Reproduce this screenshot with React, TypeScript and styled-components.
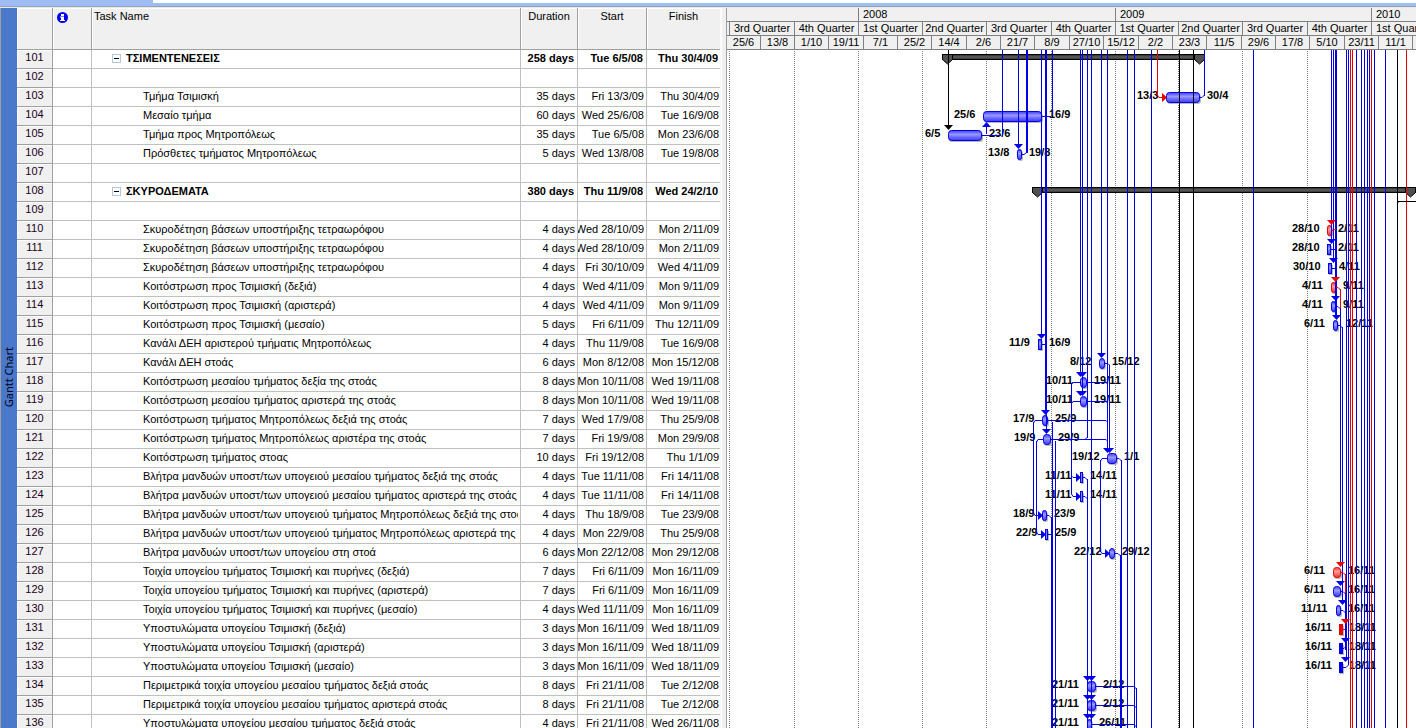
import React from "react";
import styled, { createGlobalStyle } from "styled-components";

const GlobalStyle = createGlobalStyle`
  html, body, #root { height: 100%; }
  body {
    margin: 0;
    overflow: hidden;
    background: #fff;
    color: #000;
    font-family: "Liberation Sans", Arial, sans-serif;
    font-size: 11px;
  }
`;

const ROW = 19;
const FIRST_ROW = 101;

/* ---------- data ---------- */

type Task = {
  id: number;
  name?: string;
  duration?: string;
  start?: string;
  finish?: string;
  summary?: boolean;
};

const t = (id: number, name: string, duration: string, start: string, finish: string, summary = false): Task => ({
  id,
  name,
  duration,
  start,
  finish,
  summary,
});

const tasks: Task[] = [
  t(101, "ΤΣΙΜΕΝΤΕΝΕΣΕΙΣ", "258 days", "Tue 6/5/08", "Thu 30/4/09", true),
  { id: 102 },
  t(103, "Τμήμα Τσιμισκή", "35 days", "Fri 13/3/09", "Thu 30/4/09"),
  t(104, "Μεσαίο τμήμα", "60 days", "Wed 25/6/08", "Tue 16/9/08"),
  t(105, "Τμήμα προς Μητροπόλεως", "35 days", "Tue 6/5/08", "Mon 23/6/08"),
  t(106, "Πρόσθετες τμήματος Μητροπόλεως", "5 days", "Wed 13/8/08", "Tue 19/8/08"),
  { id: 107 },
  t(108, "ΣΚΥΡΟΔΕΜΑΤΑ", "380 days", "Thu 11/9/08", "Wed 24/2/10", true),
  { id: 109 },
  t(110, "Σκυροδέτηση βάσεων υποστήριξης τετραωρόφου", "4 days", "Wed 28/10/09", "Mon 2/11/09"),
  t(111, "Σκυροδέτηση βάσεων υποστήριξης τετραωρόφου", "4 days", "Wed 28/10/09", "Mon 2/11/09"),
  t(112, "Σκυροδέτηση βάσεων υποστήριξης τετραωρόφου", "4 days", "Fri 30/10/09", "Wed 4/11/09"),
  t(113, "Κοιτόστρωση προς Τσιμισκή (δεξιά)", "4 days", "Wed 4/11/09", "Mon 9/11/09"),
  t(114, "Κοιτόστρωση προς Τσιμισκή (αριστερά)", "4 days", "Wed 4/11/09", "Mon 9/11/09"),
  t(115, "Κοιτόστρωση προς Τσιμισκή (μεσαίο)", "5 days", "Fri 6/11/09", "Thu 12/11/09"),
  t(116, "Κανάλι ΔΕΗ αριστερού τμήματις Μητροπόλεως", "4 days", "Thu 11/9/08", "Tue 16/9/08"),
  t(117, "Κανάλι ΔΕΗ στοάς", "6 days", "Mon 8/12/08", "Mon 15/12/08"),
  t(118, "Κοιτόστρωση μεσαίου τμήματος δεξία της στοάς", "8 days", "Mon 10/11/08", "Wed 19/11/08"),
  t(119, "Κοιτόστρωση μεσαίου τμήματος αριστερά της στοάς", "8 days", "Mon 10/11/08", "Wed 19/11/08"),
  t(120, "Κοιτόστρωση τμήματος Μητροπόλεως δεξιά της στοάς", "7 days", "Wed 17/9/08", "Thu 25/9/08"),
  t(121, "Κοιτόστρωση τμήματος Μητροπόλεως αριστέρα της στοάς", "7 days", "Fri 19/9/08", "Mon 29/9/08"),
  t(122, "Κοιτόστρωση τμήματος στοας", "10 days", "Fri 19/12/08", "Thu 1/1/09"),
  t(123, "Βλήτρα μανδυών υποστ/των υπογειού μεσαίου τμήματος δεξιά της στοάς", "4 days", "Tue 11/11/08", "Fri 14/11/08"),
  t(124, "Βλήτρα μανδυών υποστ/των υπογειού μεσαίου τμήματος αριστερά της στοάς", "4 days", "Tue 11/11/08", "Fri 14/11/08"),
  t(125, "Βλήτρα μανδυών υποστ/των υπογειού τμήματος Μητροπόλεως δεξιά της στοάς", "4 days", "Thu 18/9/08", "Tue 23/9/08"),
  t(126, "Βλήτρα μανδυών υποστ/των υπογειού τμήματος Μητροπόλεως αριστερά της στοάς", "4 days", "Mon 22/9/08", "Thu 25/9/08"),
  t(127, "Βλήτρα μανδυών υποστ/των υπογείου στη στοά", "6 days", "Mon 22/12/08", "Mon 29/12/08"),
  t(128, "Τοιχία υπογείου τμήματος Τσιμισκή και πυρήνες (δεξιά)", "7 days", "Fri 6/11/09", "Mon 16/11/09"),
  t(129, "Τοιχία υπογείου τμήματος Τσιμισκή και πυρήνες (αριστερά)", "7 days", "Fri 6/11/09", "Mon 16/11/09"),
  t(130, "Τοιχία υπογείου τμήματος Τσιμισκή και πυρήνες (μεσαίο)", "4 days", "Wed 11/11/09", "Mon 16/11/09"),
  t(131, "Υποστυλώματα υπογείου Τσιμισκή (δεξιά)", "3 days", "Mon 16/11/09", "Wed 18/11/09"),
  t(132, "Υποστυλώματα υπογείου Τσιμισκή (αριστερά)", "3 days", "Mon 16/11/09", "Wed 18/11/09"),
  t(133, "Υποστυλώματα υπογείου Τσιμισκή (μεσαίο)", "3 days", "Mon 16/11/09", "Wed 18/11/09"),
  t(134, "Περιμετρικά τοιχία υπογείου μεσαίου τμήματος δεξιά στοάς", "8 days", "Fri 21/11/08", "Tue 2/12/08"),
  t(135, "Περιμετρικά τοιχία υπογείου μεσαίου τμήματος αριστερά στοάς", "8 days", "Fri 21/11/08", "Tue 2/12/08"),
  t(136, "Υποστυλώματα υπογείου μεσαίου τμήματος δεξιά στοάς", "4 days", "Fri 21/11/08", "Wed 26/11/08"),
];

type Scale = { label: string; width: number };

const years: Scale[] = [
  { label: "", width: 132 },
  { label: "2008", width: 257 },
  { label: "2009", width: 256 },
  { label: "2010", width: 257 },
];

const quarterNames = ["1st Quarter", "2nd Quarter", "3rd Quarter", "4th Quarter"];
const quarters: Scale[] = [
  { label: "", width: 3 },
  ...[65, 64, 64, 64, 65, 64, 63, 64, 65, 64, 64].map((width, i) => ({
    label: quarterNames[(i + 2) % 4],
    width,
  })),
];

const weekLabels =
  "25/6 13/8 1/10 19/11 7/1 25/2 14/4 2/6 21/7 8/9 27/10 15/12 2/2 23/3 11/5 29/6 17/8 5/10 23/11 11/1".split(" ");
const weekWidths = [34, 34, 34, 35, 34, 34, 35, 34, 34, 35, 34, 35, 34, 34, 35, 34, 34, 35, 34, 34];
const weeks: Scale[] = [...weekLabels.map((label, i) => ({ label, width: weekWidths[i] })), { label: "", width: 34 }];

/* Chart geometry: x on the timeline in pixels, y counted from the top of the window. */
const ORIGIN_X = 727;
const ORIGIN_Y = 50;

const BLUE = "#0000e8";
const RED = "#e80000";
const BLACK = "#000000";

type Bar = {
  id: number;
  from: number;
  to: number;
  left: [string, number];
  right: [string, number];
  critical?: boolean;
};

const b = (id: number, from: number, to: number, l: string, lx: number, r: string, rx: number, critical = false): Bar => ({
  id,
  from,
  to,
  left: [l, lx],
  right: [r, rx],
  critical,
});

const bars: Bar[] = [
  b(103, 1166, 1200, "13/3", 1137, "30/4", 1207),
  b(104, 983, 1042, "25/6", 954, "16/9", 1049),
  b(105, 948, 982, "6/5", 925, "23/6", 989),
  b(106, 1017, 1022, "13/8", 988, "19/8", 1029),
  b(110, 1327, 1332, "28/10", 1292, "2/11", 1338, true),
  b(111, 1327, 1331, "28/10", 1292, "2/11", 1338),
  b(112, 1328, 1332, "30/10", 1293, "4/11", 1339),
  b(113, 1331, 1336, "4/11", 1302, "9/11", 1343, true),
  b(114, 1331, 1336, "4/11", 1302, "9/11", 1343),
  b(115, 1333, 1338, "6/11", 1304, "12/11", 1346),
  b(116, 1038, 1042, "11/9", 1009, "16/9", 1049),
  b(117, 1099, 1105, "8/12", 1070, "15/12", 1112),
  b(118, 1080, 1087, "10/11", 1046, "19/11", 1094),
  b(119, 1080, 1087, "10/11", 1046, "19/11", 1094),
  b(120, 1042, 1048, "17/9", 1013, "25/9", 1055),
  b(121, 1043, 1051, "19/9", 1014, "29/9", 1058),
  b(122, 1107, 1117, "19/12", 1072, "1/1", 1124),
  b(123, 1080, 1083, "11/11", 1045, "14/11", 1090),
  b(124, 1080, 1083, "11/11", 1045, "14/11", 1090),
  b(125, 1042, 1047, "18/9", 1013, "23/9", 1054),
  b(126, 1045, 1048, "22/9", 1016, "25/9", 1055),
  b(127, 1109, 1115, "22/12", 1074, "29/12", 1122),
  b(128, 1333, 1341, "6/11", 1304, "16/11", 1348, true),
  b(129, 1333, 1341, "6/11", 1304, "16/11", 1348),
  b(130, 1336, 1341, "11/11", 1301, "16/11", 1348),
  b(131, 1339, 1343, "16/11", 1305, "18/11", 1349, true),
  b(132, 1339, 1343, "16/11", 1305, "18/11", 1349),
  b(133, 1339, 1343, "16/11", 1305, "18/11", 1349),
  b(134, 1087, 1096, "21/11", 1052, "2/12", 1103),
  b(135, 1087, 1096, "21/11", 1052, "2/12", 1103),
  b(136, 1087, 1092, "21/11", 1052, "26/11", 1099),
];

const BOTTOM = 740;

/* Vertical link segments: x, top, bottom, colour, thickness. */
const verticals: [number, number, number, string, number?][] = [
  [948, 50, 126, BLACK],
  [986, 126, 134, BLUE],
  [1002, 50, 135, BLUE],
  [1018, 50, 146, BLUE],
  [1026, 50, 153, BLUE, 2],
  [1041, 50, 336, BLUE],
  [1045, 50, 412, BLUE, 2],
  [1046, 412, 431, BLUE],
  [1052, 50, 115, BLUE],
  [1080, 50, 375, BLUE],
  [1082, 50, 394, BLUE],
  [1087, 50, 438, BLUE],
  [1087, 479, 728, BLUE],
  [1091, 50, 728, BLUE],
  [1101, 50, 355, BLUE],
  [1107, 50, 452, BLUE],
  [1109, 365, 452, BLUE],
  [1127, 50, BOTTOM, BLUE],
  [1134, 50, BOTTOM, BLUE],
  [1151, 50, BOTTOM, BLUE],
  [1157, 50, 96, RED],
  [1179, 50, BOTTOM, BLACK],
  [1193, 50, BOTTOM, BLACK],
  [1204, 50, 96, BLUE],
  [1253, 50, BOTTOM, BLUE],
  [1331, 50, 242, BLUE],
  [1333, 50, 261, BLUE],
  [1335, 50, 317, BLUE, 2],
  [1340, 289, 308, RED],
  [1340, 308, 564, BLUE],
  [1342, 327, 602, BLUE],
  [1346, 50, 659, BLUE],
  [1345, 574, 593, RED],
  [1345, 593, 650, BLUE],
  [1348, 50, 665, BLUE],
  [1350, 50, BOTTOM, RED],
  [1352, 50, BOTTOM, RED],
  [1356, 50, BOTTOM, BLUE],
  [1361, 50, BOTTOM, BLUE],
  [1364, 50, BOTTOM, BLUE],
  [1367, 50, BOTTOM, BLUE],
  [1369, 50, BOTTOM, BLUE],
  [1371, 50, BOTTOM, RED],
  [1374, 50, BOTTOM, BLUE],
  [1385, 50, BOTTOM, BLUE],
  [1397, 50, BOTTOM, BLACK],
  [1406, 50, BOTTOM, RED],
  [1033, 422, 513, BLUE],
  [1036, 441, 532, BLUE],
  [1052, 422, BOTTOM, BLUE],
  [1051, 517, BOTTOM, BLUE],
  [1055, 441, BOTTOM, BLUE],
  [1071, 384, 494, BLUE],
  [1100, 460, 552, BLUE],
  [1121, 460, BOTTOM, BLUE],
  [1120, 555, BOTTOM, BLUE],
  [1136, 688, BOTTOM, BLUE],
];

/* Connectors that leave or enter a bar; the corners are cut by one pixel. */
const connectors: [string, string][] = [
  ["M982 135.5H1001", BLUE],
  ["M1042 116.5H1051", BLUE],
  ["M1022 154.5H1024L1026 153", BLUE],
  ["M1157.5 95L1159 97.5H1164", RED],
  ["M1200 97.5H1202L1204.5 95", BLUE],
  ["M1042 344.5H1046", BLUE],
  ["M1105 363.5H1108L1109.5 365", BLUE],
  ["M1071.5 385V383.5L1073 382.5H1081M1088 382.5H1107", BLUE],
  ["M1073 401.5H1081M1071.5 403L1073 401.5M1088 401.5H1107", BLUE],
  ["M1033.5 423L1035 420.5H1042M1048 420.5H1106L1107.5 422", BLUE],
  ["M1036.5 442L1038 439.5H1043M1051 439.5H1106L1107.5 441M1085 439.5L1087.5 437", BLUE],
  ["M1100.5 461L1102 458.5H1107M1117 458.5H1119L1121.5 461", BLUE],
  ["M1071.5 476L1073 477.5H1077M1083 477.5H1085L1087.5 480", BLUE],
  ["M1071.5 494L1073 496.5H1077M1083 496.5H1085L1087.5 499", BLUE],
  ["M1033.5 513L1035 515.5H1039M1047 515.5H1049L1051.5 518", BLUE],
  ["M1036.5 532L1038 534.5H1042M1048 534.5H1051", BLUE],
  ["M1100.5 551L1102 553.5H1106M1115 553.5H1118L1120.5 556", BLUE],
  ["M1096 686.5H1134L1136.5 689", BLUE],
  ["M1096 705.5H1134L1136.5 708", BLUE],
  ["M1092 724.5H1134L1136.5 727", BLUE],
  ["M1332 230.5H1333L1336 229", RED],
  ["M1331 249.5H1335", BLUE],
  ["M1332 268.5H1335", BLUE],
  ["M1336 287.5H1338L1340.5 290", RED],
  ["M1336 306.5H1338L1340.5 309", BLUE],
  ["M1338 325.5H1340L1342.5 328", BLUE],
  ["M1341 572.5H1343L1345.5 575", RED],
  ["M1341 591.5H1343L1345.5 594", BLUE],
  ["M1341 610.5H1343L1345.5 613", BLUE],
  ["M1343 629.5H1345", RED],
  ["M1343 648.5H1344L1346.5 646", BLUE],
  ["M1343 667.5H1346L1348.5 665", BLUE],
  ["M1398 203V201.5H1420", BLACK],
];

type Direction = "down" | "up" | "right";
const arrows: [number, number, Direction, string][] = [
  [948, 125, "down", BLACK],
  [986, 122, "up", BLUE],
  [1018, 144, "down", BLUE],
  [1162, 97, "right", RED],
  [1041, 334, "down", BLUE],
  [1045, 410, "down", BLUE],
  [1046, 429, "down", BLUE],
  [1101, 353, "down", BLUE],
  [1080, 372, "down", BLUE],
  [1082, 372, "down", BLUE],
  [1080, 391, "down", BLUE],
  [1082, 391, "down", BLUE],
  [1107, 448, "down", BLUE],
  [1109, 448, "down", BLUE],
  [1076, 477, "right", BLUE],
  [1076, 496, "right", BLUE],
  [1038, 515, "right", BLUE],
  [1041, 534, "right", BLUE],
  [1105, 553, "right", BLUE],
  [1331, 220, "down", RED],
  [1331, 239, "down", BLUE],
  [1333, 258, "down", BLUE],
  [1335, 277, "down", RED],
  [1335, 296, "down", BLUE],
  [1336, 315, "down", BLUE],
  [1340, 562, "down", RED],
  [1340, 581, "down", BLUE],
  [1342, 600, "down", BLUE],
  [1345, 619, "down", RED],
  [1345, 638, "down", BLUE],
  [1345, 657, "down", BLUE],
  ...[676, 695, 714].flatMap((y): [number, number, Direction, string][] => [
    [1087, y, "down", BLUE],
    [1091, y, "down", BLUE],
  ]),
];

const quarterLines = [729, 794, 858, 922, 986, 1051, 1115, 1178, 1242, 1307];

/* ---------- page frame ---------- */

const Page = styled.main`
  height: 100vh;
  display: flex;
  flex-direction: column;
  overflow: hidden;
`;

const EntryStrip = styled.div`
  flex: none;
  display: flex;
  height: 6px;
  background: #9dbcf4;
  border-bottom: 1px solid #a0a0a0;
`;

const EntryField = styled.div`
  flex: 1;
  height: 3px;
  margin-left: 153px;
  background: #fff;
`;

const Workspace = styled.div`
  flex: 1;
  min-height: 0;
  display: flex;
  align-items: stretch;
  overflow: hidden;
  border-top: 1px solid #dcecf8;
`;

const ViewBar = styled.aside`
  flex: none;
  box-sizing: border-box;
  width: 17px;
  padding-top: 339px;
  background: #4a79cb;
  border-left: 1px solid #a0a0a0;
  color: #000014;
  font: 11px/16px "Noto Sans", "Open Sans", sans-serif;
`;

const ViewName = styled.span`
  display: block;
  writing-mode: vertical-rl;
  rotate: 180deg;
  white-space: nowrap;
`;

/* ---------- task table ---------- */

const TaskTable = styled.table`
  flex: none;
  align-self: flex-start;
  width: 703px;
  table-layout: fixed;
  border-collapse: separate;
  border-spacing: 0;
`;

const HeadCell = styled.th<{ $align?: "left" | "center" }>`
  box-sizing: border-box;
  height: 42px;
  padding: 0 2px;
  vertical-align: top;
  text-align: ${(p) => p.$align ?? "center"};
  font-weight: 400;
  line-height: 16px;
  background: #f0f0f0;
  border-right: 1px solid #a0a0a0;
  border-bottom: 1px solid #a0a0a0;
  box-shadow: inset 1px 1px #fff;
  &:last-child { border-right: 0; }
`;

const RowNumber = styled.th`
  box-sizing: border-box;
  height: ${ROW}px;
  padding: 0 0 4px;
  text-align: center;
  font-weight: 400;
  line-height: 14px;
  color: #200020;
  background: #f0f0f0;
  border-right: 1px solid #a0a0a0;
  border-bottom: 1px solid #a0a0a0;
  box-shadow: inset 1px 1px #fff;
`;

const Cell = styled.td<{ $bold?: boolean }>`
  box-sizing: border-box;
  height: ${ROW}px;
  padding: 0;
  border-right: 1px solid #c0c0c0;
  border-bottom: 1px solid #c0c0c0;
  font-weight: ${(p) => (p.$bold ? 700 : 400)};
  &:last-child { border-right: 0; }
`;

const NameText = styled.div<{ $summary?: boolean }>`
  display: flex;
  align-items: center;
  gap: 5px;
  height: 16px;
  margin: 0 2px 2px 0;
  padding-left: ${(p) => (p.$summary ? 20 : 51)}px;
  overflow: hidden;
  line-height: 16px;
  white-space: nowrap;
`;

const ValueText = styled.div<{ $inset: number }>`
  display: flex;
  justify-content: flex-end;
  height: 16px;
  margin: 0 ${(p) => p.$inset}px 2px 0;
  overflow: hidden;
  line-height: 16px;
  white-space: nowrap;
`;

const Toggle = styled.button`
  flex: none;
  display: flex;
  align-items: center;
  justify-content: center;
  box-sizing: border-box;
  width: 9px;
  height: 9px;
  padding: 0;
  border: 1px solid #b4c8dc;
  background: #fff;
  &::before {
    content: "";
    width: 5px;
    height: 1px;
    background: #000;
  }
`;

const InfoIcon = styled.svg`
  display: block;
  margin: 4px 0 0 2px;
`;

/* ---------- chart ---------- */

const Splitter = styled.div`
  flex: none;
  box-sizing: border-box;
  width: 7px;
  background: #f0f0f0;
  border-left: 1px solid #fafafa;
  border-right: 1px solid #a0a0a0;
  box-shadow: inset 1px 0 #fff;
`;

const ChartPane = styled.section`
  flex: 1;
  min-width: 0;
  overflow: hidden;
`;

const ScaleRow = styled.div`
  display: flex;
  box-sizing: border-box;
  height: 14px;
  overflow: hidden;
  background: #f0f0f0;
  border-bottom: 1px solid #808080;
`;

const ScaleCell = styled.div<{ $width: number; $left?: boolean }>`
  flex: none;
  box-sizing: border-box;
  width: ${(p) => p.$width}px;
  padding-left: ${(p) => (p.$left ? 4 : 0)}px;
  overflow: hidden;
  text-align: ${(p) => (p.$left ? "left" : "center")};
  line-height: 12px;
  white-space: nowrap;
  border-right: 1px solid #808080;
`;

const Chart = styled.svg`
  display: block;
  width: 100%;
  height: ${ROW * 36}px;
`;

const BarLabel = styled.text`
  font: 700 11px "Liberation Sans", Arial, sans-serif;
`;

const rowTop = (id: number) => ORIGIN_Y + (id - FIRST_ROW) * ROW;

function arrowPath(x: number, y: number, dir: Direction) {
  if (dir === "down") return `M${x - 4} ${y}h9l-4.5 5z`;
  if (dir === "up") return `M${x - 4} ${y + 5}h9l-4.5 -5z`;
  return `M${x} ${y - 4}v9l5 -4.5z`;
}

function TaskBar({ bar }: { bar: Bar }) {
  const y = rowTop(bar.id) + 4;
  const w = bar.to - bar.from;
  const solid = w === 4 && bar.id > 130;
  const stroke = bar.critical ? RED : BLUE;
  const fill = solid || w < 4 ? stroke : bar.critical ? "url(#critical)" : "url(#normal)";
  const radius = w > 5 ? 3 : w > 4 ? 2 : 0;
  return (
    <g>
      <rect x={bar.from + 1} y={y + 2} width={w} height={10} rx={radius} fill="#b8b8b8" />
      <rect x={bar.from + 0.5} y={y + 0.5} width={w - 1} height={10} rx={radius} fill={fill} stroke={stroke} />
      {w === 3 && <rect x={bar.from + 1} y={y + 1} width={1} height={9} fill="#8080ff" />}
    </g>
  );
}

function SummaryBar({ id, from, to }: { id: number; from: number; to: number }) {
  const y = rowTop(id) + 4;
  const cap = (x: number) => `M${x + 0.5} ${y + 0.5}h10v5l-5 4.5l-5 -4.5z`;
  return (
    <g>
      <rect x={from} y={y} width={to - from} height={6} fill="#000" />
      <rect x={from} y={y + 1} width={to - from} height={4} fill="url(#summary)" />
      <path d={cap(from)} fill="#505050" stroke="#000" />
      <path d={cap(to - 11)} fill="#505050" stroke="#000" />
    </g>
  );
}

function GanttChart() {
  return (
    <Chart role="img" aria-label="Gantt chart">
      <defs>
        <linearGradient id="normal" x1="0" y1="0" x2="0" y2="1">
          <stop offset="0" stopColor="#4040ff" />
          <stop offset="0.4" stopColor="#9898ff" />
          <stop offset="0.65" stopColor="#6c6cff" />
          <stop offset="1" stopColor="#3c3cf4" />
        </linearGradient>
        <linearGradient id="critical" x1="0" y1="0" x2="0" y2="1">
          <stop offset="0" stopColor="#ff4040" />
          <stop offset="0.4" stopColor="#ff9c9c" />
          <stop offset="0.65" stopColor="#ff6c6c" />
          <stop offset="1" stopColor="#f43030" />
        </linearGradient>
        <linearGradient id="summary" x1="0" y1="0" x2="0" y2="1">
          <stop offset="0" stopColor="#303030" />
          <stop offset="0.5" stopColor="#606060" />
          <stop offset="1" stopColor="#383838" />
        </linearGradient>
      </defs>
      <g transform={`translate(${-ORIGIN_X} ${-ORIGIN_Y})`}>
        {quarterLines.map((x) => (
          <path key={x} d={`M${x + 0.5} 51V${BOTTOM}`} stroke="#808080" strokeDasharray="1 1" />
        ))}
        <SummaryBar id={101} from={942} to={1205} />
        <SummaryBar id={108} from={1032} to={1416} />
        {bars.map((bar) => (
          <TaskBar key={bar.id} bar={bar} />
        ))}
        {bars.map((bar) => (
          <g key={bar.id}>
            <BarLabel x={bar.left[1]} y={rowTop(bar.id) + 11}>
              {bar.left[0]}
            </BarLabel>
            <BarLabel x={bar.right[1]} y={rowTop(bar.id) + 11}>
              {bar.right[0]}
            </BarLabel>
          </g>
        ))}
        {verticals.map(([x, top, bottom, color, width = 1], i) => (
          <rect key={i} x={x} y={top} width={width} height={bottom - top} fill={color} />
        ))}
        {connectors.map(([d, color], i) => (
          <path key={i} d={d} fill="none" stroke={color} />
        ))}
        {arrows.map(([x, y, dir, color], i) => (
          <path key={i} d={arrowPath(x, y, dir)} fill={color} />
        ))}
      </g>
    </Chart>
  );
}

function TaskRow({ task }: { task: Task }) {
  return (
    <tr>
      <RowNumber scope="row">{task.id}</RowNumber>
      <Cell />
      <Cell $bold={task.summary}>
        {task.name && (
          <NameText $summary={task.summary}>
            {task.summary && <Toggle type="button" aria-label={`Collapse ${task.name}`} />}
            <span>{task.name}</span>
          </NameText>
        )}
      </Cell>
      {[task.duration, task.start, task.finish].map((value, i) => (
        <Cell key={i} $bold={task.summary}>
          {value && <ValueText $inset={(task.summary ? 3 : 2) - (i === 2 ? 1 : 0)}>{value}</ValueText>}
        </Cell>
      ))}
    </tr>
  );
}

export default function App() {
  return (
    <Page>
      <GlobalStyle />
      <EntryStrip>
        <EntryField />
      </EntryStrip>
      <Workspace>
        <ViewBar>
          <ViewName>Gantt Chart</ViewName>
        </ViewBar>
        <TaskTable>
          <colgroup>
            {[36, 39, 429, 57, 69, 73].map((width, i) => (
              <col key={i} width={width} />
            ))}
          </colgroup>
          <thead>
            <tr>
              <HeadCell />
              <HeadCell>
                <InfoIcon width="11" height="11" viewBox="0 0 11 11" role="img" aria-label="Indicators">
                  <circle cx="5.5" cy="5.5" r="5.5" fill="#0000f0" />
                  <path d="M4 2h3v2h-3zM3 4.5h4v3.5h1v1h-5v-1h1v-2.5h-1z" fill="#fff" />
                </InfoIcon>
              </HeadCell>
              <HeadCell $align="left">Task Name</HeadCell>
              <HeadCell>Duration</HeadCell>
              <HeadCell>Start</HeadCell>
              <HeadCell>Finish</HeadCell>
            </tr>
          </thead>
          <tbody>
            {tasks.map((task) => (
              <TaskRow key={task.id} task={task} />
            ))}
          </tbody>
        </TaskTable>
        <Splitter />
        <ChartPane>
          <ScaleRow>
            {years.map((cell, i) => (
              <ScaleCell key={i} $width={cell.width} $left>
                {cell.label}
              </ScaleCell>
            ))}
          </ScaleRow>
          <ScaleRow>
            {quarters.map((cell, i) => (
              <ScaleCell key={i} $width={cell.width}>
                {cell.label}
              </ScaleCell>
            ))}
          </ScaleRow>
          <ScaleRow>
            {weeks.map((cell, i) => (
              <ScaleCell key={i} $width={cell.width}>
                {cell.label}
              </ScaleCell>
            ))}
          </ScaleRow>
          <GanttChart />
        </ChartPane>
      </Workspace>
    </Page>
  );
}
